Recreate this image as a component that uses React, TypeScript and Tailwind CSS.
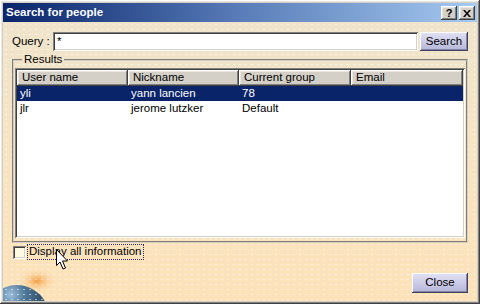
import React from 'react';

const raised =
  'shadow-[inset_-1px_-1px_#404040,inset_1px_1px_#ffffff,inset_-2px_-2px_#808080,inset_2px_2px_#e8e6e0]';
const sunken =
  'shadow-[inset_1px_1px_#808080,inset_-1px_-1px_#ffffff,inset_2px_2px_#404040,inset_-2px_-2px_#d4d0c8]';

const columns = ['User name', 'Nickname', 'Current group', 'Email'];
const widths = ['w-[111px]', 'w-[111px]', 'w-[112px]', 'w-[112px]'];

const rows = [
  { user: 'yli', nick: 'yann lancien', group: '78', email: '', selected: true },
  { user: 'jlr', nick: 'jerome lutzker', group: 'Default', email: '', selected: false },
];

const TitleButton: React.FC<{ children: React.ReactNode }> = ({ children }) => (
  <div className={`w-[16px] h-[14px] bg-[#d4d0c8] flex items-center justify-center text-[11px] font-bold text-black leading-none ${raised}`}>
    {children}
  </div>
);

const LavenderButton: React.FC<{ label: string; className?: string }> = ({ label, className }) => (
  <button
    type="button"
    className={`bg-gradient-to-b from-[#e2e2f6] to-[#b4b4d8] text-[11.5px] text-black flex items-center justify-center shadow-[inset_-1px_-1px_#404060,inset_1px_1px_#ffffff,inset_-2px_-2px_#8484a4] ${className ?? ''}`}
  >
    {label}
  </button>
);

const App: React.FC = () => {
  return (
    <div
      className={`relative w-[480px] h-[304px] overflow-hidden bg-[#d4d0c8] p-[3px] flex flex-col ${raised} font-['Liberation_Sans',Arial,sans-serif]`}
    >
      {/* Title bar */}
      <div className="h-[19px] shrink-0 flex items-center justify-between bg-gradient-to-r from-[#0a246a] via-[#5a7cb8] to-[#a6caf0] pl-[3px] pr-[2px]">
        <span className="text-white text-[11.5px] font-bold">Search for people</span>
        <div className="flex gap-[2px] mt-[1px]">
          <TitleButton>?</TitleButton>
          <TitleButton>
            <svg width="8" height="7" viewBox="0 0 8 7">
              <path d="M0 0h2l2 2.5L6 0h2L5 3.5 8 7H6L4 4.5 2 7H0l3-3.5z" fill="#000" />
            </svg>
          </TitleButton>
        </div>
      </div>

      {/* Body */}
      <div className="relative flex-1 bg-gradient-to-b from-[#efe4cb] via-[#f8e4c2] to-[#fde2b9]">
        {/* globe */}
        <svg className="absolute left-0 bottom-0" width="60" height="34" viewBox="0 0 60 34">
          <defs>
            <radialGradient id="glow" cx="0.5" cy="0.5" r="0.5">
              <stop offset="0" stopColor="#f59a38" stopOpacity="0.95" />
              <stop offset="1" stopColor="#fde2b9" stopOpacity="0" />
            </radialGradient>
            <radialGradient id="earth" cx="0.4" cy="0.15" r="0.75">
              <stop offset="0" stopColor="#9cc0dc" />
              <stop offset="0.3" stopColor="#4f7898" />
              <stop offset="1" stopColor="#1a2a40" />
            </radialGradient>
          </defs>
          <ellipse cx="34" cy="14" rx="20" ry="13" fill="url(#glow)" />
          <circle cx="14" cy="50" r="32" fill="url(#earth)" />
        </svg>

        <div className="relative h-full flex flex-col bg-[radial-gradient(circle,rgba(255,255,255,0.55)_0.7px,transparent_1px)] bg-[length:6px_5px] px-[9px] pt-[10px] pb-[8px]">
          {/* Query row */}
          <div className="flex items-center h-[19px]">
            <span className="w-[41px] text-[11.5px] text-black">Query :</span>
            <div className={`flex-1 h-[19px] bg-white flex items-center pl-[4px] text-[11.5px] text-black ${sunken}`}>*</div>
            <LavenderButton label="Search" className="ml-[2px] w-[48px] h-[19px]" />
          </div>

          {/* Results group */}
          <fieldset className="mt-[2px] h-[190px] border-2 border-[#d4d0c8] [border-style:groove] px-[1px] pt-[2px] pb-[1px]">
            <legend className="ml-[7px] px-[2px] text-[11.5px] leading-[13px] text-black">Results</legend>
            <div className={`h-[170px] bg-white p-[2px] ${sunken}`}>
              <div className="flex h-[16px]">
                {columns.map((c, i) => (
                  <div
                    key={c}
                    className={`${widths[i]} h-[16px] bg-[#d4d0c8] text-[11.5px] text-black flex items-center pl-[5px] ${raised}`}
                  >
                    {c}
                  </div>
                ))}
              </div>
              {rows.map(r => (
                <div
                  key={r.user}
                  className={`flex h-[15px] items-center text-[11.5px] ${r.selected ? 'bg-[#0a246a] text-white' : 'text-black'}`}
                >
                  <div className="w-[111px] pl-[3px]">{r.user}</div>
                  <div className="w-[111px] pl-[3px]">{r.nick}</div>
                  <div className="w-[112px] pl-[3px]">{r.group}</div>
                  <div className="w-[112px] pl-[3px]">{r.email}</div>
                </div>
              ))}
            </div>
          </fieldset>

          {/* Checkbox */}
          <div className="flex items-center h-[16px] mt-[1px] ml-[1px]">
            <div className={`w-[13px] h-[13px] bg-[#fffbe2] ${sunken}`} />
            <span className="ml-[1px] px-[1px] h-[16px] flex items-center text-[11.5px] text-black border border-dotted border-[#2a2a5a]">
              Display all information
            </span>
          </div>

          <div className="flex-1" />

          <div className="flex justify-end">
            <LavenderButton label="Close" className="w-[56px] h-[20px]" />
          </div>
        </div>
      </div>

      {/* mouse cursor */}
      <svg className="absolute left-[56px] top-[249px]" width="13" height="21" viewBox="0 0 13 21">
        <path
          d="M0.5 0.5v16l3.5-3.5 3 7 2.5-1-3-7h5z"
          fill="#fff"
          stroke="#000"
          strokeWidth="1"
          strokeLinejoin="miter"
        />
      </svg>
    </div>
  );
};

export default App;
